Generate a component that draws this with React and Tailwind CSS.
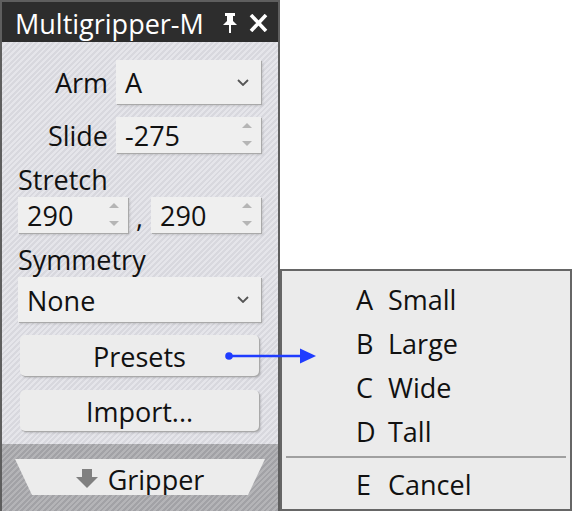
import React from "react";

const hatchLight =
  "bg-[repeating-linear-gradient(135deg,#d8d8de_0px,#d8d8de_2px,#e5e5ea_2px,#e5e5ea_4px)]";
const hatchDark =
  "bg-[repeating-linear-gradient(135deg,#a2a2a6_0px,#a2a2a6_2px,#b4b4b7_2px,#b4b4b7_4px)]";
const box = "bg-[#efefef] shadow-[1px_1px_0_#a9a9a9,2px_2px_2px_rgba(0,0,0,0.12)]";

function Chevron() {
  return (
    <svg width="12" height="7" viewBox="0 0 12 7" className="shrink-0">
      <path d="M1 1 L6 6 L11 1" stroke="#555" strokeWidth="1.8" fill="none" />
    </svg>
  );
}

function UpDown() {
  return (
    <div className="flex flex-col items-center justify-between self-stretch pt-[6px] pb-[7px]">
      <svg width="10" height="5" viewBox="0 0 10 5">
        <path d="M0 5 L5 0 L10 5Z" fill="#b5b5b5" />
      </svg>
      <svg width="10" height="5" viewBox="0 0 10 5">
        <path d="M0 0 L10 0 L5 5Z" fill="#b5b5b5" />
      </svg>
    </div>
  );
}

function Select({ value, className }) {
  return (
    <div className={`${box} ${className} flex items-center justify-between pl-[9px] pr-[12px]`}>
      <span className="pt-[3px]">{value}</span>
      <Chevron />
    </div>
  );
}

function Spin({ value, className }) {
  return (
    <div className={`${box} ${className} flex items-center justify-between pl-[9px] pr-[9px]`}>
      <span className="pt-[3px]">{value}</span>
      <UpDown />
    </div>
  );
}

function Button({ children, className }) {
  return (
    <div
      className={`mx-[2px] h-[41px] rounded-[5px] bg-[#ececec] shadow-[1px_1px_0_#a9a9a9,2px_2px_2px_rgba(0,0,0,0.15)] flex items-center justify-center ${className}`}
    >
      <span className="pt-[4px]">{children}</span>
    </div>
  );
}

export default function App() {
  return (
    <div className="relative w-[572px] h-[511px] bg-white overflow-hidden font-['Open_Sans',sans-serif] text-[27px] text-[#111]">
      {/* Panel */}
      <div className="w-[280px] h-[511px] flex flex-col border-x-2 border-t-2 border-[#5e5e5e]">
        <div className="h-[40px] bg-[#2d2d2d] flex items-center justify-between pl-[13px] pr-[10px] text-white">
          <span className="leading-[40px] pt-[4px]">Multigripper-M</span>
          <div className="flex items-center gap-[12px] pt-[2px]">
            <svg width="14" height="20" viewBox="0 0 14 20">
              <rect x="2" y="0" width="10" height="3" fill="#fff" />
              <rect x="4" y="3" width="6" height="5" fill="#fff" />
              <path d="M4 8 L10 8 L14 12 L0 12Z" fill="#fff" />
              <rect x="6" y="12" width="2" height="8" fill="#fff" />
            </svg>
            <svg width="19" height="18" viewBox="0 0 19 18">
              <path d="M2 1 L17 17 M17 1 L2 17" stroke="#fff" strokeWidth="3.6" />
            </svg>
          </div>
        </div>

        <div className={`${hatchLight} flex flex-col pl-[16px] pr-[17px]`}>
          <div className="mt-[18px] h-[44px] flex items-center justify-end gap-[8px]">
            <span className="pt-[3px]">Arm</span>
            <Select value="A" className="w-[145px] h-[44px]" />
          </div>
          <div className="mt-[13px] h-[36px] flex items-center justify-end gap-[8px]">
            <span className="pt-[3px]">Slide</span>
            <Spin value="-275" className="w-[145px] h-[36px]" />
          </div>
          <div className="mt-[10px] leading-[34px]">Stretch</div>
          <div className="h-[36px] flex items-center justify-between">
            <Spin value="290" className="w-[110px] h-[36px]" />
            <span className="leading-[36px] pt-[3px]">,</span>
            <Spin value="290" className="w-[110px] h-[36px]" />
          </div>
          <div className="mt-[10px] leading-[34px]">Symmetry</div>
          <Select value="None" className="h-[45px]" />
          <Button className="mt-[13px]">Presets</Button>
          <Button className="mt-[14px]">Import...</Button>
          <div className="h-[13px]" />
        </div>

        <div className={`${hatchDark} flex-1 pt-[15px] pl-[13px]`}>
          <div className="w-[250px] h-[36px] bg-[#ececec] [clip-path:polygon(0_0,250px_0,233px_100%,17px_100%)] flex items-center justify-center gap-[10px]">
            <svg width="22" height="19" viewBox="0 0 22 19" className="mt-[2px]">
              <rect x="6" y="0" width="10" height="9" fill="#808080" />
              <path d="M0 8 L22 8 L11 19Z" fill="#808080" />
            </svg>
            <span className="leading-[36px] pt-[5px]">Gripper</span>
          </div>
        </div>
      </div>

      {/* Popup menu */}
      <div className="absolute left-[280px] top-[269px] w-[292px] h-[242px] bg-[#ebebeb] border-2 border-[#666] pt-[6px]">
        {[
          ["A", "Small"],
          ["B", "Large"],
          ["C", "Wide"],
          ["D", "Tall"],
        ].map(([k, l]) => (
          <div key={k} className="h-[44px] flex items-center pl-[74px] leading-[44px] pt-[1px]">
            <span className="w-[32px]">{k}</span>
            <span>{l}</span>
          </div>
        ))}
        <div className="mt-[3px] mx-[4px] h-[2px] bg-[#a0a0a0]" />
        <div className="mt-[5px] h-[44px] flex items-center pl-[74px] leading-[44px]">
          <span className="w-[32px]">E</span>
          <span>Cancel</span>
        </div>
      </div>

      {/* Connector arrow */}
      <svg className="absolute left-0 top-0 pointer-events-none" width="572" height="511">
        <circle cx="229" cy="356" r="3.8" fill="#1f3cff" />
        <line x1="229" y1="356" x2="303" y2="356" stroke="#1f3cff" strokeWidth="2.6" />
        <path d="M300 348.5 L316 356 L300 363.5Z" fill="#1f3cff" />
      </svg>
    </div>
  );
}
